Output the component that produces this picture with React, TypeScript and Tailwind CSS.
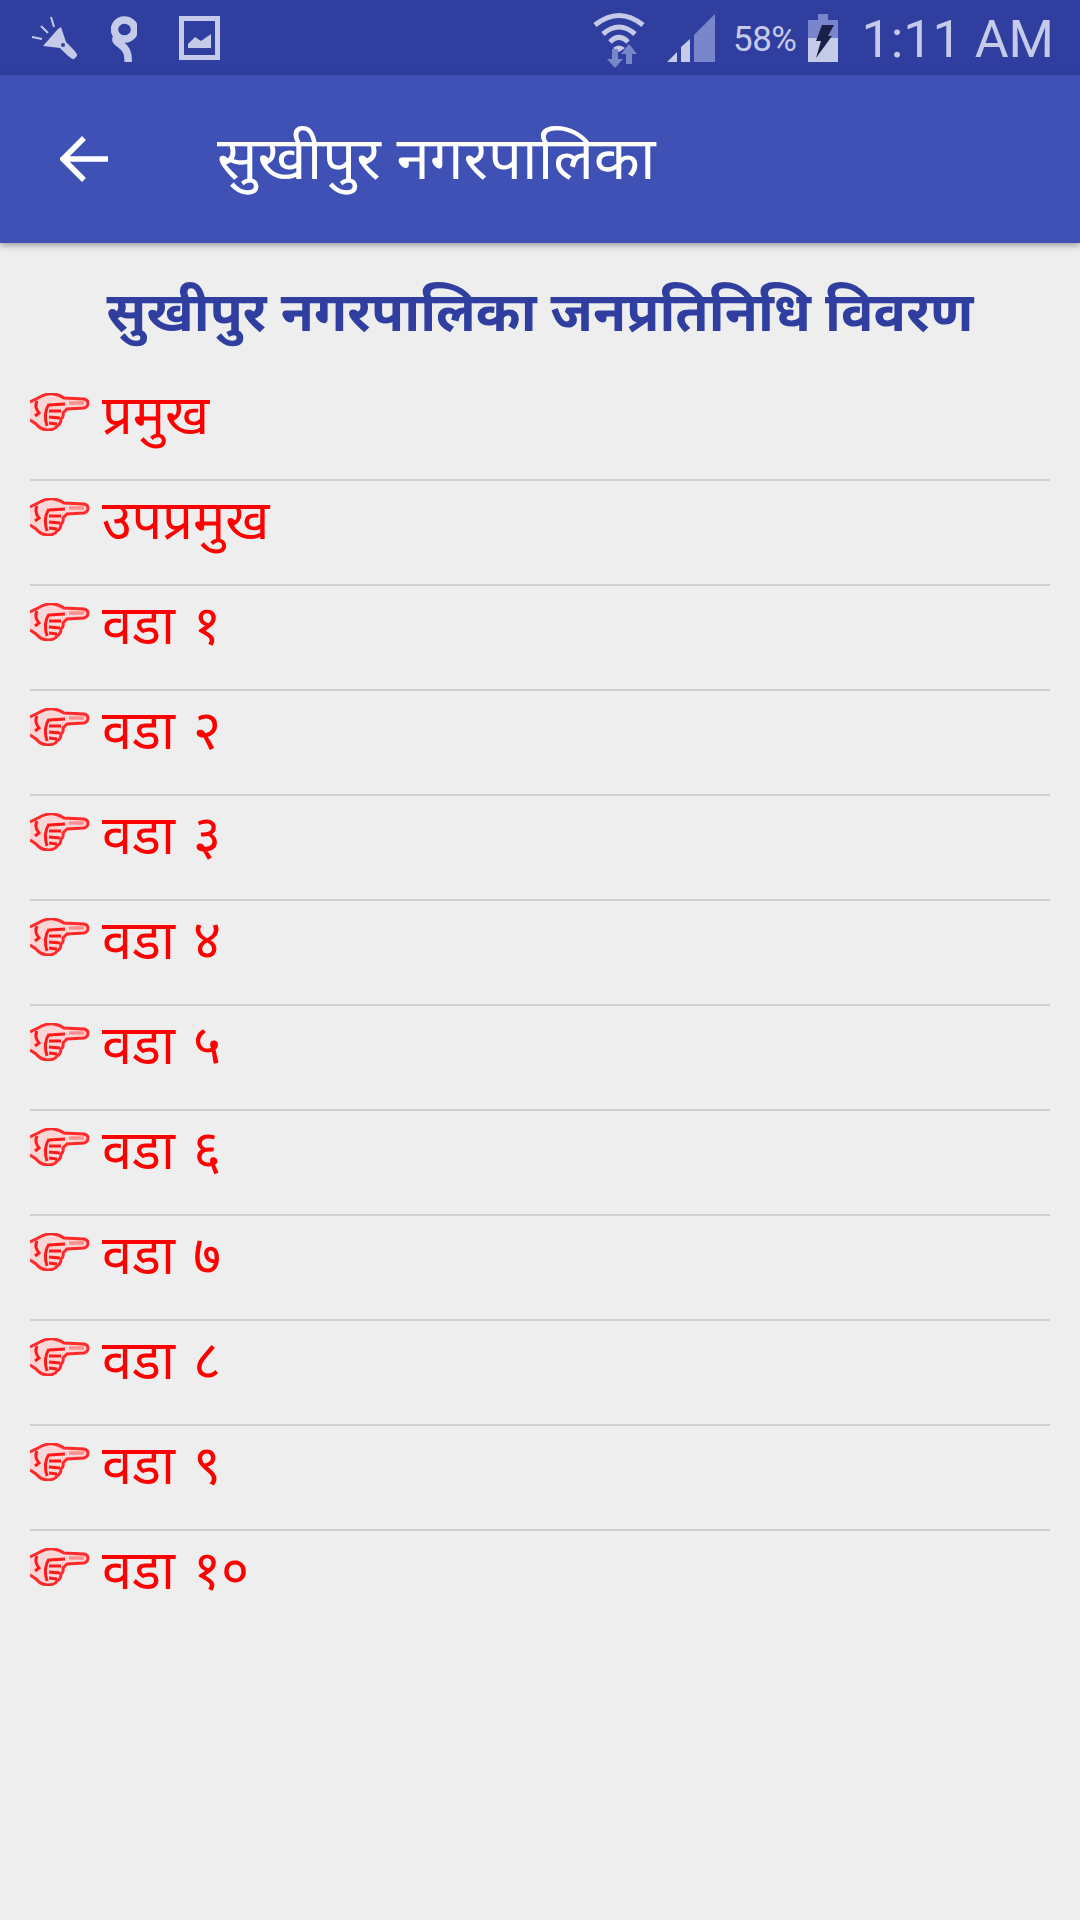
import React from "react";

const items = ["प्रमुख", "उपप्रमुख", "वडा १", "वडा २", "वडा ३", "वडा ४", "वडा ५", "वडा ६", "वडा ७", "वडा ८", "वडा ९", "वडा १०"];

function Hand() {
    return (
        <svg width="60" height="38" viewBox="0 0 60 38" fill="none" className="shrink-0 blur-[0.6px]">
            <path d="M0 9 L8 5 Q16 0 24 1 Q30 2 34 5 L54 6 Q58 7 58 10 Q58 14 54 15 L37 16 L33 20 Q34 24 31 26 Q31 31 27 33 Q25 37 18 37 Q11 37 6 31 L0 27" stroke="#ff2a2a" strokeWidth="3" fill="#fbd6d6" />
            <path d="M7 8 Q4 14 9 20 L5 23 M19 12 L35 11 M19 18 L31 18 M19 24 L30 25 M19 30 L27 31 M19 11 Q13 20 17 33" stroke="#ff1a1a" strokeWidth="3" />
            <path d="M39 10 L54 10" stroke="#ff9090" strokeWidth="3.500" />
        </svg>
    );
}

function StatusBar() {
    return (
        <div className="h-[75px] bg-[#303f9f] flex items-center pl-[30px] pr-[26px] shrink-0">
            {/* flashlight */}
            <svg width="50" height="50" viewBox="0 0 50 50" className="shrink-0 mt-[2px]">
                <path d="M28 15 L31 13 L36 28 L41 33 Q48 40 47 42 L44 45 Q42 46 35 39 L30 34 L13 32 Z" fill="#c5cae9" />
                <circle cx="33" cy="31" r="2" fill="#303f9f" />
                <path d="M21 3 L24 13 M11 12 L18 19 M2 23 L12 25" stroke="#c5cae9" strokeWidth="2" />
            </svg>
            {/* sim digit */}
            <svg width="26" height="46" viewBox="0 0 26 46" className="ml-[31px] shrink-0 mt-[2px]">
                <path d="M14 23 A10 9.500 0 1 1 13 4 A10 9.500 0 0 1 14 23 Q8 25 5 23 Q4 25 10 29 Q18 34 17 46" stroke="#c5cae9" strokeWidth="7.500" fill="none" />
                <circle cx="12" cy="13" r="3" fill="#303f9f" />
            </svg>
            {/* image */}
            <svg width="41" height="44" viewBox="0 0 41 44" className="ml-[42px] shrink-0">
                <path fillRule="evenodd" d="M0 0H41V44H0Z M5 5V39H36V5Z" fill="#c5cae9" />
                <path d="M9 32 V28 L16 21 L22 25 L32 18 V32 Z" fill="#c5cae9" />
            </svg>
            <div className="flex-1" />
            {/* wifi */}
            <svg width="52" height="56" viewBox="0 0 52 56" className="shrink-0 mt-[4px]">
                <path d="M2 13 Q26 -6 50 13 M10 22 Q26 8 42 22 M17 30 Q26 21 35 30" stroke="#c5cae9" strokeWidth="5" fill="none" />
                <path d="M20 36 Q26 31 32 36 L26 40 Z" fill="#c5cae9" />
                <path d="M19 37 H25 V47 H30 L22 56 L14 47 H19 Z" fill="#7986cb" />
                <path d="M36 32 L44 42 H39 V52 H33 V42 H28 Z" fill="#7986cb" />
            </svg>
            {/* signal */}
            <svg width="48" height="48" viewBox="0 0 48 48" className="ml-[22px] shrink-0">
                <path d="M0 48 L10 38 V48 Z M14 33 L23 25 V48 H14 Z" fill="#c5cae9" />
                <path d="M27 21 L48 0 V48 H27 Z" fill="#7986cb" />
            </svg>
            <span className="ml-[18px] text-[35px] text-[#c5cae9] leading-none font-['Roboto',sans-serif] tracking-[-0.5px] mt-[4px]">58%</span>
            {/* battery */}
            <svg width="30" height="48" viewBox="0 0 30 48" className="ml-[11px] shrink-0">
                <path d="M10 0 H20 V6 H30 V24 H0 V6 H10 Z" fill="#7986cb" />
                <path d="M0 24 H30 V48 H0 Z" fill="#c5cae9" />
                <path d="M14 11 H26 L20 22 H24 L8 44 L13 27 H8 Z" fill="#1a2048" />
            </svg>
            <span className="ml-[24px] text-[52px] text-[#c5cae9] leading-none font-['Roboto',sans-serif] mt-[4px]">1:11 AM</span>
        </div>
    );
}

export default function App() {
    return (
        <div className="w-[1080px] h-[1920px] bg-[#eeeeee] flex flex-col font-['Noto_Sans','Liberation_Sans',sans-serif] overflow-hidden">
            <StatusBar />
            <div className="h-[168px] bg-[#3f51b5] flex items-center shrink-0 shadow-[0_3px_6px_rgba(0,0,0,0.3)] relative">
                <svg width="48" height="48" viewBox="0 0 48 48" className="ml-[60px] shrink-0">
                    <path d="M48 24 H4 M24 3 L3 24 L24 45" stroke="#fff" strokeWidth="5.500" fill="none" />
                </svg>
                <span className="ml-[109px] text-white text-[60px] leading-none mb-[6px]">सुखीपुर नगरपालिका</span>
            </div>
            <h1 className="mt-[35px] text-center text-[#303f9f] text-[54px] font-bold leading-[64px]">सुखीपुर नगरपालिका जनप्रतिनिधि विवरण</h1>
            <div className="mx-[30px] mt-[34px]">
                {items.map((t, i) => (
                    <div key={t} className={"h-[105px] flex items-start pt-[17px] " + (i < items.length - 1 ? "border-b-2 border-[#cfcfcf]" : "")}>
                        <Hand />
                        <span className="ml-[12px] text-[#ff0000] text-[54px] leading-[64px] [word-spacing:4px] mt-[-12px]">{t}</span>
                    </div>
                ))}
            </div>
        </div>
    );
}
